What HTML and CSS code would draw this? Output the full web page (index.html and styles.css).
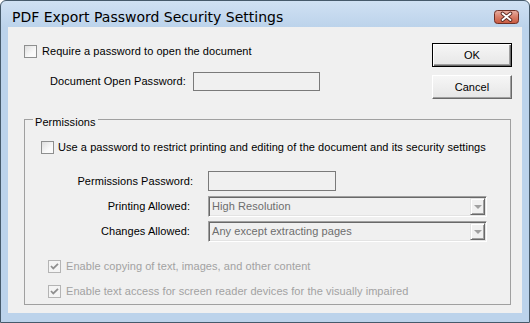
FILE: index.html
```html
<!DOCTYPE html>
<html>
	<head>
		<title>PDF Export Password Security Settings</title>
		<link rel="stylesheet" href="styles.css">
	</head>
	<body>
		<div class="window">
			<div class="titlebar">
				<span class="title">PDF Export Password Security Settings</span>
				<span class="close-btn">
					<svg width="25" height="14" viewBox="0 0 25 14">
						<defs>
							<linearGradient id="close-grad" x1="0" y1="0" x2="0" y2="1">
								<stop offset="0" stop-color="#e8b0a4"/>
								<stop offset="0.5" stop-color="#d77d68"/>
								<stop offset="1" stop-color="#c9583e"/>
							</linearGradient>
						</defs>
						<rect x="0.5" y="0.5" width="24" height="13" rx="3" fill="url(#close-grad)" stroke="#6e2f24"/>
						<path d="M8.5 3.5 L16.5 10 M16.5 3.5 L8.5 10" stroke="#5b2a22" stroke-width="3.6" stroke-linecap="round"/>
						<path d="M8.5 3.5 L16.5 10 M16.5 3.5 L8.5 10" stroke="#ffffff" stroke-width="1.8" stroke-linecap="round"/>
					</svg>
				</span>
			</div>
			<div class="client">
				<div class="top">
					<div class="top-left">
						<div class="check-row">
							<span class="checkbox"></span>
							<span class="check-label">Require a password to open the document</span>
						</div>
						<div class="field-row open-row">
							<span class="open-label">Document Open Password:</span>
							<span class="textbox open-box"></span>
						</div>
					</div>
					<div class="buttons">
						<div class="btn btn-default">OK</div>
						<div class="btn">Cancel</div>
					</div>
				</div>

				<fieldset class="group">
					<legend>Permissions</legend>
					<div class="group-body">
						<div class="check-row">
							<span class="checkbox"></span>
							<span class="check-label label-tight">Use a password to restrict printing and editing of the document and its security settings</span>
						</div>
						<div class="field-row perm-row">
							<span class="form-label form-label-wide">Permissions Password:</span>
							<span class="textbox perm-box"></span>
						</div>
						<div class="field-row select-row print-row">
							<span class="form-label">Printing Allowed:</span>
							<div class="select">
								<span class="select-text">High Resolution</span>
								<span class="drop"><span class="arrow"></span></span>
							</div>
						</div>
						<div class="field-row select-row">
							<span class="form-label">Changes Allowed:</span>
							<div class="select">
								<span class="select-text">Any except extracting pages</span>
								<span class="drop"><span class="arrow"></span></span>
							</div>
						</div>
						<div class="check-row disabled copy-row">
							<span class="checkbox checked">
								<svg width="11" height="11" viewBox="0 0 11 11"><path d="M2 5 L4.3 7.5 L9 2.8" fill="none" stroke="#8f8f8f" stroke-width="1.8"/></svg>
							</span>
							<span class="check-label">Enable copying of text, images, and other content</span>
						</div>
						<div class="check-row disabled access-row">
							<span class="checkbox checked">
								<svg width="11" height="11" viewBox="0 0 11 11"><path d="M2 5 L4.3 7.5 L9 2.8" fill="none" stroke="#8f8f8f" stroke-width="1.8"/></svg>
							</span>
							<span class="check-label">Enable text access for screen reader devices for the visually impaired</span>
						</div>
					</div>
				</fieldset>
			</div>
		</div>
	</body>
</html>
```

FILE: styles.css
```css
body
{
	margin: 0;
	font-family: "Liberation Sans", Arial, sans-serif;
	font-size: 11px;
	letter-spacing: 0.06px;
	color: #000;
}

.window
{
	box-sizing: border-box;
	width: 530px;
	height: 323px;
	border: 1px solid #465a6b;
	border-radius: 6px 6px 0 0;
	background: linear-gradient(#d0e1f3, #bcd3eb 26px);
	padding: 0 7px 9px;
	display: flex;
	flex-direction: column;
}

.titlebar
{
	box-sizing: border-box;
	height: 26px;
	padding-top: 8px;
	display: flex;
	justify-content: space-between;
	align-items: flex-start;
}

.title
{
	font-family: "DejaVu Sans", sans-serif;
	font-size: 14px;
	line-height: 16px;
	letter-spacing: 0;
	padding-left: 4px;
}

.close-btn
{
	width: 25px;
	height: 14px;
	margin-top: 1px;
	margin-right: 3px;
}

.close-btn svg
{
	display: block;
}

.client
{
	flex: 1;
	background-color: #f0f0f0;
	padding: 15px 10px 0 16px;
}

.top
{
	display: flex;
	justify-content: space-between;
	height: 57px;
}

.check-row
{
	display: flex;
	align-items: center;
	height: 13px;
	line-height: 13px;
	margin-top: 3px;
	white-space: nowrap;
}

.checkbox
{
	box-sizing: border-box;
	flex: none;
	width: 13px;
	height: 13px;
	border: 1px solid #8e8f8f;
	background: linear-gradient(135deg, #dedede, #fafafa 65%);
}

.checkbox svg
{
	display: block;
}

.checkbox.checked
{
	border-color: #b4b4b4;
	background: #f4f4f4;
}

.check-label
{
	margin-left: 5px;
}

.label-tight
{
	margin-left: 4px;
}

.disabled .check-label
{
	color: #a2a2a2;
}

.field-row
{
	display: flex;
	align-items: center;
	line-height: 13px;
	white-space: nowrap;
}

.open-row
{
	margin-top: 14px;
	padding-left: 26px;
}

.open-label
{
	width: 143px;
}

.textbox
{
	box-sizing: border-box;
	height: 19px;
	border: 1px solid #7a7a7a;
	background-color: #f0f0f0;
}

.open-box
{
	width: 127px;
}

.buttons
{
	display: flex;
	flex-direction: column;
	gap: 8px;
	margin-top: 1px;
}

.btn
{
	box-sizing: border-box;
	width: 80px;
	height: 24px;
	display: flex;
	align-items: center;
	justify-content: center;
	background: linear-gradient(#f6f6f6, #e6e6e6);
	border: 1px solid;
	border-color: #fff #696969 #696969 #fff;
	box-shadow: inset -1px -1px #a0a0a0;
}

.btn-default
{
	border-color: #000;
	box-shadow: inset 1px 1px #fff, inset -1px -1px #696969, inset -2px -2px #a0a0a0;
}

.group
{
	box-sizing: border-box;
	width: 487px;
	margin: 11px 0 0 0;
	padding: 0;
	border: 1px solid #a0a0a0;
	min-inline-size: 0;
}

.group legend
{
	margin-left: 8px;
	padding: 6px 2px 0;
	line-height: 13px;
}

.group-body
{
	padding: 0 0 6px 16px;
}

.group-body .check-row
{
	margin-top: 12px;
}

.perm-row
{
	margin-top: 17px;
}

.form-label
{
	box-sizing: border-box;
	width: 167px;
	padding-right: 18px;
	text-align: right;
}

.form-label-wide
{
	padding-right: 15px;
}

.perm-box
{
	width: 128px;
	height: 20px;
}

.select-row
{
	margin-top: 4px;
}

.print-row
{
	margin-top: 5px;
}

.select
{
	box-sizing: border-box;
	width: 279px;
	height: 21px;
	display: flex;
	align-items: center;
	justify-content: space-between;
	border: 1px solid;
	border-color: #a0a0a0 #fff #fff #a0a0a0;
	box-shadow: inset 1px 1px #696969, inset -1px -1px #e3e3e3;
	background-color: #f0f0f0;
	color: #6d6d6d;
	padding-left: 3px;
}

.drop
{
	box-sizing: border-box;
	width: 15px;
	height: 17px;
	margin-right: 1px;
	display: flex;
	align-items: center;
	justify-content: center;
	border: 1px solid;
	border-color: #e3e3e3 #696969 #696969 #e3e3e3;
	box-shadow: inset 1px 1px #fff, inset -1px -1px #a0a0a0;
	background-color: #f0f0f0;
}

.arrow
{
	width: 0;
	height: 0;
	border-left: 4px solid transparent;
	border-right: 4px solid transparent;
	border-top: 4px solid #a0a0a0;
}

.group-body .copy-row
{
	margin-top: 18px;
	padding-left: 7px;
}

.group-body .access-row
{
	padding-left: 7px;
}
```
